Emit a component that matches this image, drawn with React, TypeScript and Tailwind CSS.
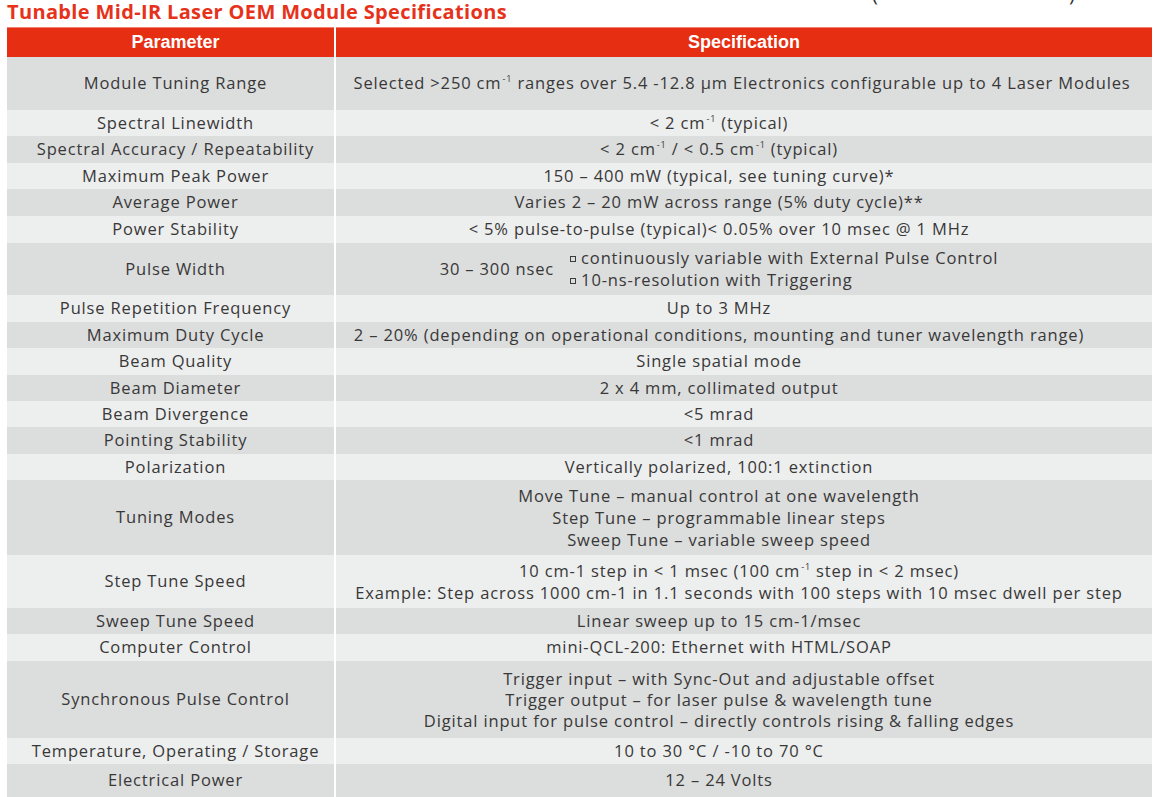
import React from "react";

type Row = { p: string; h: number; s: React.ReactNode; pad?: string };

const Sup = () => <sup className="text-[9px] relative -top-[7px] ml-[1px]">-1</sup>;
const Box = () => (
  <span className="inline-block w-[6px] h-[6px] border border-[#3c3c3c] mr-[5px] relative -top-[2px]" />
);

const rows: Row[] = [
  {
    p: "Module Tuning Range",
    h: 53,
    pad: "pr-[4px]",
    s: (
      <span>
        Selected &gt;250 cm<Sup /> ranges over 5.4 -12.8 µm Electronics configurable up to 4 Laser Modules
      </span>
    ),
  },
  { p: "Spectral Linewidth", h: 26, s: <span>&lt; 2 cm<Sup /> (typical)</span> },
  {
    p: "Spectral Accuracy / Repeatability",
    h: 27,
    s: (
      <span>
        &lt; 2 cm<Sup /> / &lt; 0.5 cm<Sup /> (typical)
      </span>
    ),
  },
  { p: "Maximum Peak Power", h: 26, s: <span>150 – 400 mW (typical, see tuning curve)*</span> },
  { p: "Average Power", h: 27, s: <span>Varies 2 – 20 mW across range (5% duty cycle)**</span> },
  { p: "Power Stability", h: 27, s: <span>&lt; 5% pulse-to-pulse (typical)&lt; 0.05% over 10 msec @ 1 MHz</span> },
  {
    p: "Pulse Width",
    h: 52,
    s: (
      <div className="flex items-center gap-[16px]">
        <span>30 – 300 nsec</span>
        <div className="flex flex-col text-left leading-[22px]">
          <span>
            <Box />continuously variable with External Pulse Control
          </span>
          <span>
            <Box />10-ns-resolution with Triggering
          </span>
        </div>
      </div>
    ),
  },
  { p: "Pulse Repetition Frequency", h: 27, s: <span>Up to 3 MHz</span> },
  {
    p: "Maximum Duty Cycle",
    h: 26,
    s: <span>2 – 20% (depending on operational conditions, mounting and tuner wavelength range)</span>,
  },
  { p: "Beam Quality", h: 27, s: <span>Single spatial mode</span> },
  { p: "Beam Diameter", h: 26, s: <span>2 x 4 mm, collimated output</span> },
  { p: "Beam Divergence", h: 26, s: <span>&lt;5 mrad</span> },
  { p: "Pointing Stability", h: 27, s: <span>&lt;1 mrad</span> },
  { p: "Polarization", h: 26, s: <span>Vertically polarized, 100:1 extinction</span> },
  {
    p: "Tuning Modes",
    h: 75,
    s: (
      <div className="flex flex-col items-center leading-[22px]">
        <span>Move Tune – manual control at one wavelength</span>
        <span>Step Tune – programmable linear steps</span>
        <span>Sweep Tune – variable sweep speed</span>
      </div>
    ),
  },
  {
    p: "Step Tune Speed",
    h: 53,
    pad: "pr-[10px]",
    s: (
      <div className="flex flex-col items-center leading-[22px]">
        <span>
          10 cm-1 step in &lt; 1 msec (100 cm<Sup /> step in &lt; 2 msec)
        </span>
        <span>Example: Step across 1000 cm-1 in 1.1 seconds with 100 steps with 10 msec dwell per step</span>
      </div>
    ),
  },
  { p: "Sweep Tune Speed", h: 26, s: <span>Linear sweep up to 15 cm-1/msec</span> },
  { p: "Computer Control", h: 27, s: <span>mini-QCL-200: Ethernet with HTML/SOAP</span> },
  {
    p: "Synchronous Pulse Control",
    h: 77,
    s: (
      <div className="flex flex-col items-center leading-[21px]">
        <span>Trigger input – with Sync-Out and adjustable offset</span>
        <span>Trigger output – for laser pulse &amp; wavelength tune</span>
        <span>Digital input for pulse control – directly controls rising &amp; falling edges</span>
      </div>
    ),
  },
  { p: "Temperature, Operating / Storage", h: 26, s: <span>10 to 30 °C / -10 to 70 °C</span> },
  { p: "Electrical Power", h: 33, s: <span>12 – 24 Volts</span> },
];

export default function App() {
  return (
    <div
      className="w-[1156px] h-[797px] bg-white overflow-hidden text-[#383838]"
      style={{ fontFamily: '"Open Sans", sans-serif' }}
    >
      <div className="h-[27px] flex items-start pl-[7px] relative">
        <span className="text-[20px] font-bold text-[#e6321b] leading-[23px] tracking-[0.35px] whitespace-nowrap">
          Tunable Mid-IR Laser OEM Module Specifications
        </span>
        <span className="absolute left-[872px] -top-[16px] text-[20px] leading-[20px] text-[#333]">(</span>
        <span className="absolute left-[1069px] -top-[16px] text-[20px] leading-[20px] text-[#333]">)</span>
      </div>
      <div className="ml-[7px] w-[1145px] grid grid-cols-[327px_816px] gap-x-[2px]">
        <div
          className="h-[30px] bg-[#e52e12] text-white font-bold text-[18px] flex items-center justify-center pl-[10px] border-t border-[#f08070]"
          style={{ fontFamily: '"Liberation Sans", Arial, sans-serif' }}
        >
          Parameter
        </div>
        <div
          className="h-[30px] bg-[#e52e12] text-white font-bold text-[18px] flex items-center justify-center border-t border-[#f08070]"
          style={{ fontFamily: '"Liberation Sans", Arial, sans-serif' }}
        >
          Specification
        </div>
        {rows.map((r, i) => {
          const bg = i % 2 === 0 ? "bg-[#dcdddd]" : "bg-[#edeeee]";
          return (
            <React.Fragment key={r.p}>
              <div
                className={`${bg} flex items-center justify-center pl-[10px] text-[16.5px] tracking-[0.85px] whitespace-nowrap`}
                style={{ height: r.h }}
              >
                {r.p}
              </div>
              <div
                className={`${bg} ${r.pad ?? "pr-[50px]"} flex items-center justify-center text-[16.5px] tracking-[0.85px] text-center whitespace-nowrap`}
                style={{ height: r.h }}
              >
                {r.s}
              </div>
            </React.Fragment>
          );
        })}
      </div>
    </div>
  );
}
